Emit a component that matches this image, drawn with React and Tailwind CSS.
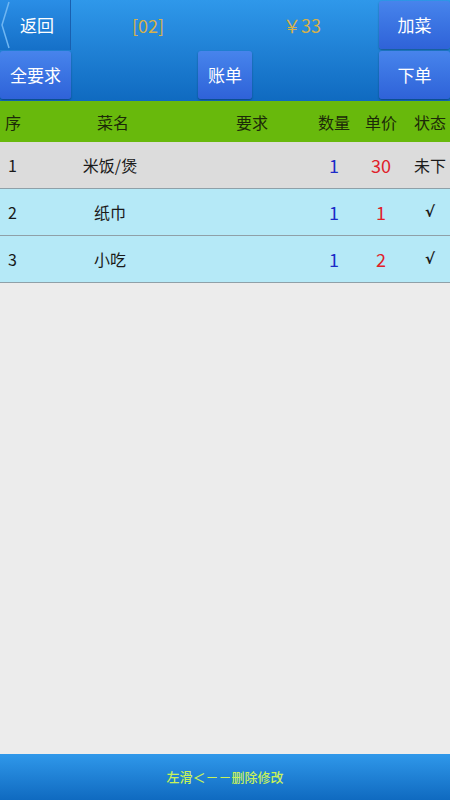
import React from 'react'

const rows = [
    { no: 1, name: '米饭/煲', qty: 1, price: 30, state: '未下', bg: 'bg-[#dcdcdc]' },
    { no: 2, name: '纸巾', qty: 1, price: 1, state: '√', bg: 'bg-[#b5e9f7]' },
    { no: 3, name: '小吃', qty: 1, price: 2, state: '√', bg: 'bg-[#b5e9f7]' },
]

const Btn = ({ children, className = '' }) => (
    <div className={`flex items-center justify-center rounded-[3px] bg-gradient-to-b from-[#4784ec] to-[#2f62d8] text-white text-[17px] shadow-[0_1px_2px_rgba(0,0,0,0.35)] ${className}`}>
        {children}
    </div>
)

const App = () => {
    return (
        <div className="flex h-[800px] w-[450px] flex-col bg-[#ececec]" style={{ fontFamily: '"Noto Sans CJK SC", "Liberation Sans", sans-serif' }}>

            {/* top bar */}
            <div className="bg-gradient-to-b from-[#2f98ea] to-[#0f6ac0]">
                <div className="flex h-[50px]">
                    <div className="relative flex w-[71px] items-center justify-center border-r border-[#1a5fae] bg-gradient-to-b from-[#2a8ee6] to-[#1570c8] pl-[4px] text-[17px] text-white">
                        <svg className="absolute left-0 top-0 h-[50px] w-[10px]" viewBox="0 0 10 50">
                            <path d="M9 2 L2 25 L9 48" fill="none" stroke="#6fb6f2" strokeWidth="1.5" />
                        </svg>
                        返回
                    </div>
                    <div className="flex flex-1 text-[18px] text-[#d7b14a]">
                        <div className="flex flex-1 items-center justify-center">[02]</div>
                        <div className="flex flex-1 items-center justify-center">￥33</div>
                    </div>
                    <Btn className="mt-[1px] h-[48px] w-[71px]">加菜</Btn>
                </div>
                <div className="flex h-[51px] items-start pt-[1px]">
                    <Btn className="h-[48px] w-[71px] text-[15px]">全要求</Btn>
                    <div className="w-[127px]" />
                    <Btn className="h-[48px] w-[54px] text-[15px]">账单</Btn>
                    <div className="flex-1" />
                    <Btn className="h-[48px] w-[71px]">下单</Btn>
                </div>
            </div>

            {/* table header */}
            <div className="flex h-[41px] items-center bg-[#68b90c] text-[16px] text-[#1c2a08]">
                <div className="w-[38px] pl-[5px]">序</div>
                <div className="w-[150px] text-center">菜名</div>
                <div className="w-[128px] text-center">要求</div>
                <div className="w-[36px] text-center">数量</div>
                <div className="w-[58px] text-center">单价</div>
                <div className="flex-1 text-center">状态</div>
            </div>

            {/* rows */}
            <div className="flex-1">
                {rows.map(r => (
                    <div key={r.no} className={`flex h-[47px] items-center border-b border-[#8fa0a8] text-[16px] text-[#1a1a1a] ${r.bg}`}>
                        <div className="w-[38px] pl-[8px]">{r.no}</div>
                        <div className="w-[150px] pr-[6px] text-center">{r.name}</div>
                        <div className="w-[128px]" />
                        <div className="w-[36px] text-center text-[18px] text-[#1c2bc8]">{r.qty}</div>
                        <div className="w-[58px] text-center text-[18px] text-[#e0202a]">{r.price}</div>
                        <div className="flex-1 text-center" style={r.state === '√' ? { fontFamily: '"DejaVu Sans", sans-serif', fontSize: '15px', fontWeight: 700 } : undefined}>{r.state}</div>
                    </div>
                ))}
            </div>

            {/* bottom hint */}
            <div className="flex h-[46px] items-center justify-center bg-gradient-to-b from-[#2f98ea] to-[#0f6ac0] text-[13px] font-medium text-[#c8f25a]">
                左滑＜－－删除修改
            </div>
        </div>
    )
}

export default App
